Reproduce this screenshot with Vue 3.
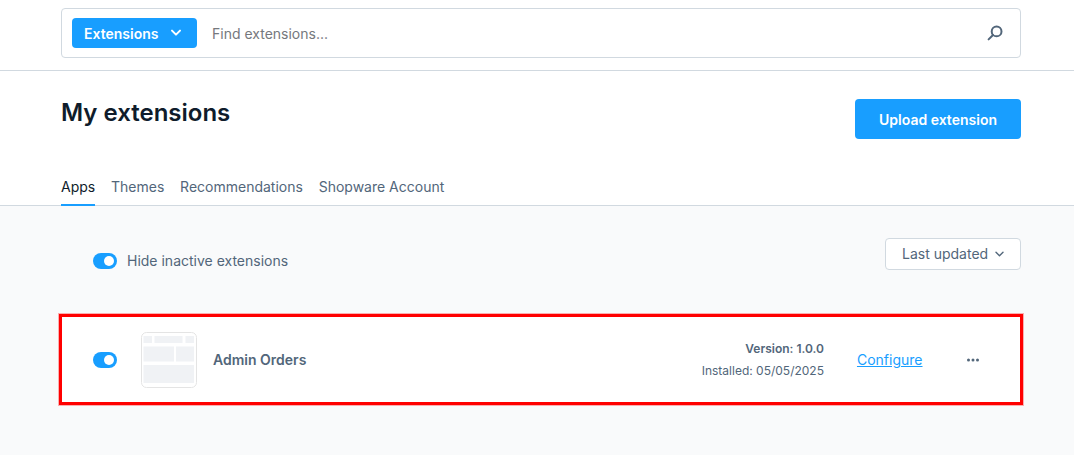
<script setup>
const tabs = ['Apps', 'Themes', 'Recommendations', 'Shopware Account']
</script>

<template>
  <div class="page">
    <header class="top">
      <div class="search-bar">
        <button class="type-btn">
          Extensions
          <svg width="12" height="8" viewBox="0 0 12 8"><path d="M2 1.6 6 5.6l4-4" fill="none" stroke="#fff" stroke-width="2" stroke-linecap="round" stroke-linejoin="round" /></svg>
        </button>
        <span class="placeholder">Find extensions...</span>
        <svg class="search-icon" width="16" height="16" viewBox="0 0 16 16"><circle cx="9.6" cy="6.4" r="4.9" fill="none" stroke="#52667a" stroke-width="2" /><path d="M6 10 1.6 14.4" fill="none" stroke="#52667a" stroke-width="2" stroke-linecap="round" /></svg>
      </div>
    </header>

    <section class="head">
      <div class="title-row">
        <h1>My extensions</h1>
        <button class="upload">Upload extension</button>
      </div>
      <nav class="tabs">
        <span v-for="(t, i) in tabs" :key="t" class="tab" :class="{ active: i === 0 }">{{ t }}</span>
      </nav>
    </section>

    <main class="body">
      <div class="filters">
        <label class="hide-inactive">
          <span class="toggle"></span>
          <span class="hide-label">Hide inactive extensions</span>
        </label>
        <div class="sort">
          <span class="sort-label">Last updated</span>
          <svg width="9" height="6" viewBox="0 0 9 6"><path d="M1 1.2 4.5 4.7 8 1.2" fill="none" stroke="#52667a" stroke-width="1.4" stroke-linecap="round" stroke-linejoin="round" /></svg>
        </div>
      </div>

      <div class="card">
        <span class="toggle"></span>
        <svg class="thumb" width="56" height="56" viewBox="0 0 56 56">
          <rect x="0.5" y="0.5" width="55" height="55" rx="5" fill="#fff" stroke="#e4e4e4" />
          <g fill="#f0f2f5">
            <rect x="2.5" y="4" width="8.5" height="7" />
            <rect x="13.5" y="4" width="28" height="7" />
            <rect x="44.5" y="4" width="8.5" height="7" />
            <rect x="2.5" y="14.5" width="30.5" height="15" />
            <rect x="35" y="14.5" width="18" height="15" />
            <rect x="2.5" y="33" width="50.5" height="18" />
          </g>
        </svg>
        <span class="name">Admin Orders</span>
        <div class="meta">
          <strong>Version: 1.0.0</strong>
          <span>Installed: 05/05/2025</span>
        </div>
        <a class="configure">Configure</a>
        <svg class="more" width="14" height="4" viewBox="0 0 14 4"><g fill="#52667a"><circle cx="2.5" cy="2" r="1.5" /><circle cx="7" cy="2" r="1.5" /><circle cx="11.5" cy="2" r="1.5" /></g></svg>
      </div>
    </main>
  </div>
</template>

<style>
html, body {
  margin: 0;
  background: #fff;
}
</style>

<style scoped>
.page {
  width: 1074px;
  height: 455px;
  overflow: hidden;
  display: flex;
  flex-direction: column;
  font-family: Inter, "Liberation Sans", sans-serif;
  color: #52667a;
  background: #fff;
}

.top {
  height: 71px;
  flex: none;
  padding: 8px 53px 0 61px;
  border-bottom: 1px solid #d1d9e0;
  box-sizing: border-box;
}

.search-bar {
  height: 50px;
  box-sizing: border-box;
  display: flex;
  align-items: center;
  padding: 0 17px 0 10px;
  border: 1px solid #d1d9e0;
  border-radius: 4px;
}

.type-btn {
  width: 125px;
  height: 30px;
  display: flex;
  align-items: center;
  gap: 12px;
  padding: 0 0 0 12px;
  border: none;
  border-radius: 4px;
  background: #189eff;
  color: #fff;
  font: 600 14px Inter, sans-serif;
}

.placeholder {
  flex: 1;
  margin-left: 15px;
  font-size: 14px;
  color: #75787d;
}

.head {
  height: 135px;
  flex: none;
  box-sizing: border-box;
  padding: 0 53px 0 61px;
  display: flex;
  flex-direction: column;
  border-bottom: 1px solid #d1d9e0;
}

.title-row {
  display: flex;
  justify-content: space-between;
  align-items: flex-start;
  padding-top: 28px;
  height: 40px;
}

h1 {
  margin: 0;
  font-size: 24px;
  line-height: 28px;
  font-weight: 600;
  color: #0f1c2b;
}

.upload {
  width: 166px;
  height: 40px;
  border: none;
  border-radius: 4px;
  background: #189eff;
  color: #fff;
  font: 600 14px Inter, sans-serif;
}

.tabs {
  display: flex;
  gap: 15.8px;
  margin-top: auto;
}

.tab {
  height: 37px;
  line-height: 36px;
  margin-bottom: -1px;
  font-size: 14px;
  box-sizing: border-box;
}

.tab.active {
  color: #0f1c2b;
  border-bottom: 2px solid #189eff;
}

.body {
  flex: 1;
  background: #f9fafb;
  padding: 32px 51px 0 59px;
}

.filters {
  display: flex;
  justify-content: space-between;
  align-items: flex-start;
  padding: 0 2px 0 34px;
}

.hide-inactive {
  display: flex;
  align-items: center;
  gap: 10px;
  margin-top: 14px;
  height: 18px;
  font-size: 14px;
}

.hide-label,
.sort-label {
  line-height: 16px;
  margin-bottom: 1px;
}

.toggle {
  width: 24px;
  height: 16px;
  border-radius: 8px;
  background: #189eff;
  flex: none;
  display: flex;
  align-items: center;
  justify-content: flex-end;
  padding-right: 3px;
  box-sizing: border-box;
}

.toggle::after {
  content: "";
  width: 10px;
  height: 10px;
  border-radius: 50%;
  background: #fff;
}

.sort {
  width: 136px;
  height: 32px;
  display: flex;
  align-items: center;
  gap: 7px;
  padding-left: 16px;
  box-sizing: border-box;
  border: 1px solid #d1d9e0;
  border-radius: 4px;
  background: #fff;
  font-size: 14px;
}

.card {
  width: 964px;
  height: 91px;
  margin-top: 44px;
  box-sizing: border-box;
  display: flex;
  align-items: center;
  padding: 0 40.5px 0 31px;
  border: 3px solid #f00;
  box-shadow: 0 0 0 1px rgba(255, 0, 0, 0.3);
  background: #fff;
}

.thumb {
  margin-left: 24px;
  flex: none;
}

.name {
  margin-left: 16px;
  font-size: 14px;
  font-weight: 600;
}

.meta {
  margin-left: auto;
  display: flex;
  flex-direction: column;
  align-items: flex-end;
  gap: 5px;
  font-size: 12px;
  line-height: 17px;
}

.meta strong {
  font-weight: 600;
}

.configure {
  margin-left: 33px;
  font-size: 14px;
  color: #189eff;
  text-decoration: underline;
}

.more {
  margin-left: 43px;
}
</style>
